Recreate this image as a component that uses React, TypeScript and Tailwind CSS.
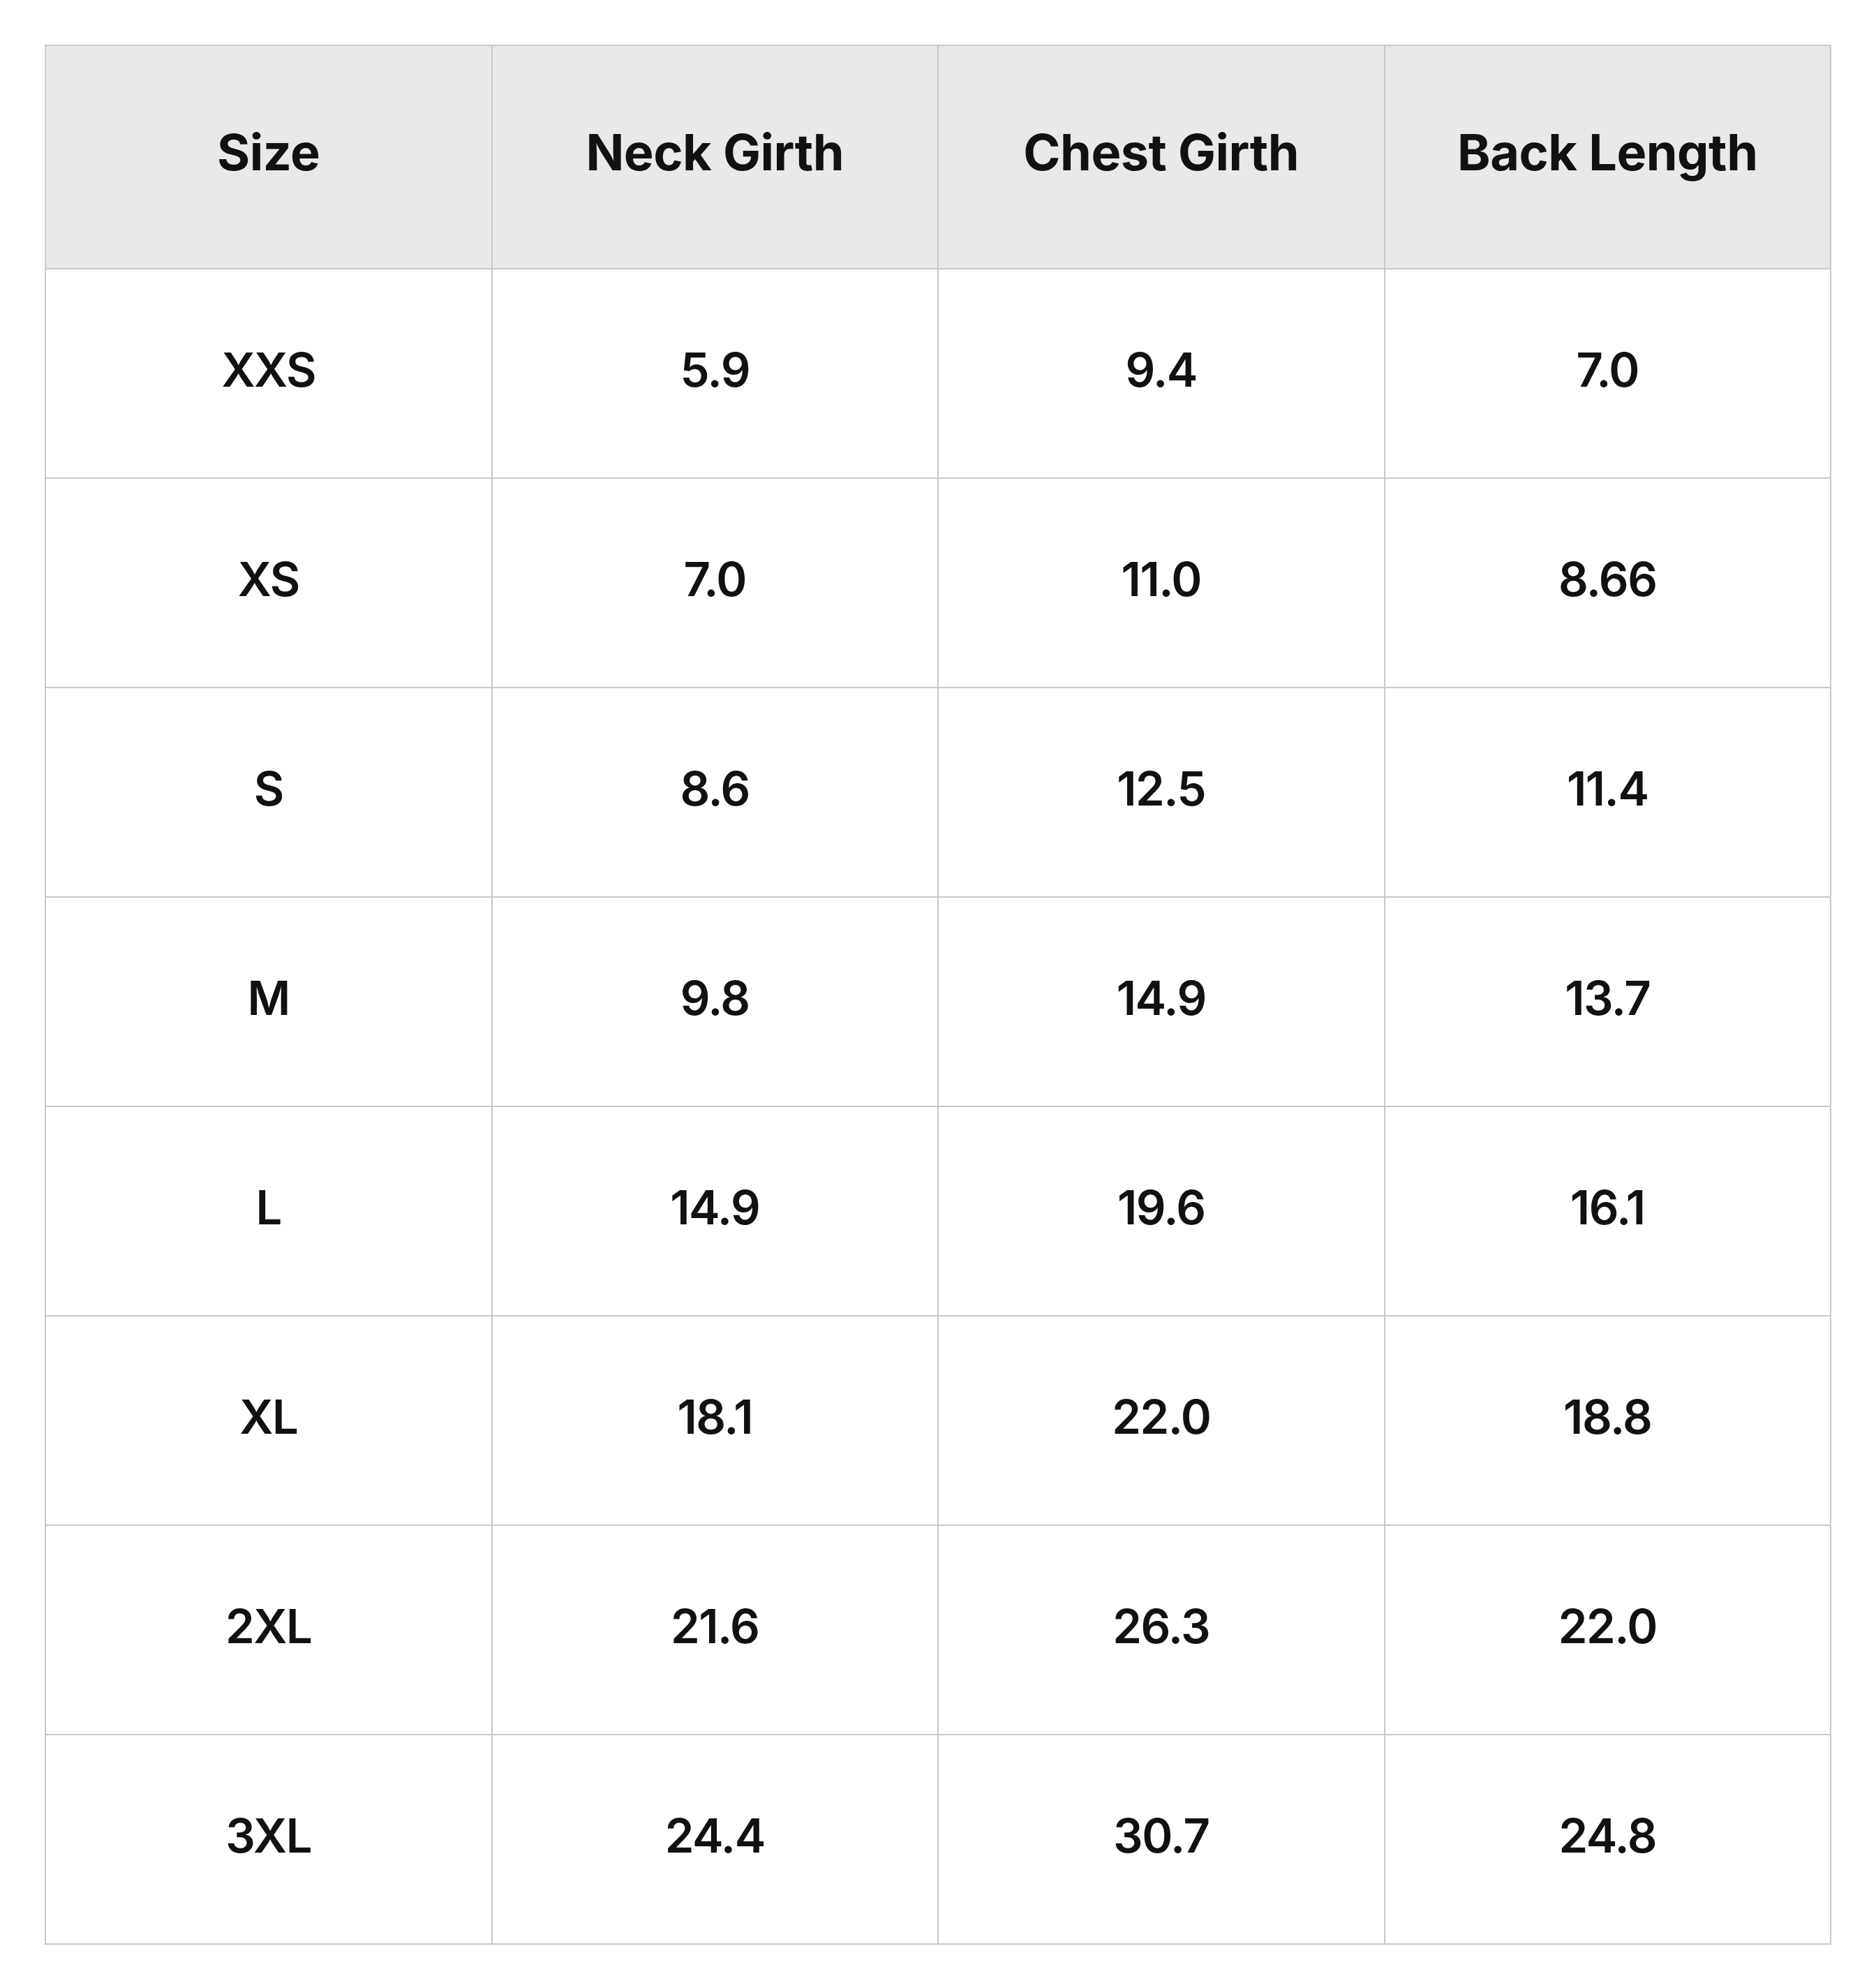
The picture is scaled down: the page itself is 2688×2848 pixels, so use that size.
const headers = ["Size", "Neck Girth", "Chest Girth", "Back Length"];

const rows = [
  ["XXS", "5.9", "9.4", "7.0"],
  ["XS", "7.0", "11.0", "8.66"],
  ["S", "8.6", "12.5", "11.4"],
  ["M", "9.8", "14.9", "13.7"],
  ["L", "14.9", "19.6", "16.1"],
  ["XL", "18.1", "22.0", "18.8"],
  ["2XL", "21.6", "26.3", "22.0"],
  ["3XL", "24.4", "30.7", "24.8"],
];

export default function App() {
  return (
    <div className="bg-white p-16 font-['Inter',sans-serif] text-[#111111]">
      <table className="w-[2560px] table-fixed border-collapse">
        <thead>
          <tr className="h-[320px] bg-[#e9e9e9]">
            {headers.map((h) => (
              <th
                key={h}
                className="border-2 border-[#c8c8c8] pb-[14px] text-center text-[72px] font-bold tracking-[-0.5px]"
              >
                {h}
              </th>
            ))}
          </tr>
        </thead>
        <tbody>
          {rows.map((row) => (
            <tr key={row[0]} className="h-[300px]">
              {row.map((cell, i) => (
                <td
                  key={i}
                  className="border-2 border-[#c8c8c8] pb-[10px] text-center text-[67px] font-semibold tracking-[-1.5px]"
                >
                  {cell}
                </td>
              ))}
            </tr>
          ))}
        </tbody>
      </table>
    </div>
  );
}
